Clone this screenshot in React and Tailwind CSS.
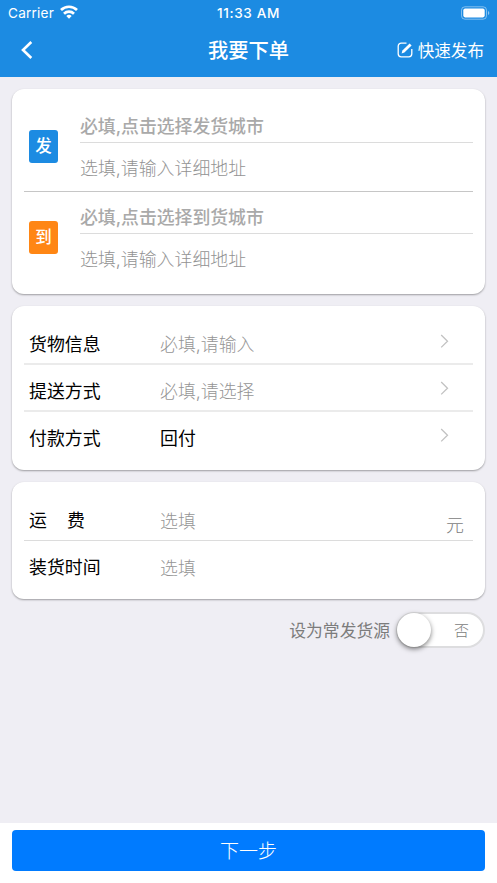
import React from 'react';

function ShipBlock({ badge, color, city, last }) {
  return (
    <div className={`flex h-[91px] items-center ${last ? '' : 'border-b border-[#c6c6c6]'}`}>
      <div className={`ml-[5px] flex h-[33px] w-[29px] shrink-0 items-center justify-center rounded-[3px] text-[16.5px] font-medium text-white ${color}`}>
        {badge}
      </div>
      <div className="ml-[22px] flex h-full flex-1 flex-col pt-2 text-[17.9px] text-[#a9a9a9]">
        <div className="h-[34px] border-b border-[#dcdcdc] font-medium leading-[35px] tracking-[-0.05px]">{city}</div>
        <div className="font-light leading-[51px] text-[#939393]">选填,请输入详细地址</div>
      </div>
    </div>
  );
}

function Row({ label, value, dark, line, arrow, unit }) {
  return (
    <div className={`flex h-[47px] items-center pl-[5px] text-[17.9px] ${line}`}>
      <div className="w-[131px] pt-[9px] text-black">{label}</div>
      <div className={`flex-1 pt-[10px] ${dark ? 'text-black' : 'font-light text-[#959595]'}`}>{value}</div>
      {arrow && (
        <svg className="mr-[24px] h-[14px] w-[9px]" viewBox="0 0 9 14" fill="none" stroke="#c2c2c2" strokeWidth="1.3">
          <path d="M1.2 1L7.5 7.2L1.2 13.4" />
        </svg>
      )}
      {unit && <div className="mr-[9px] pt-[19px] font-light text-[#7c7c7c]">{unit}</div>}
    </div>
  );
}

const card = 'rounded-[12px] bg-white px-3 pt-3 pb-[11px] shadow-[0_1px_2px_rgba(0,0,0,0.35)]';

export default function App() {
  return (
    <div className="flex h-[883px] w-[497px] flex-col overflow-hidden bg-[#efeef4] font-['Inter','Noto_Sans_CJK_SC',sans-serif]">
      <header className="h-[77px] shrink-0 bg-[#1c8be2] text-white">
        <div className="grid h-[26px] grid-cols-3 items-center px-[8px] text-[13.6px]">
          <div className="flex items-center gap-[6px] tracking-[0.2px]">
            Carrier
            <svg className="mb-px h-[14px] w-[18px]" viewBox="0 0 18 14" fill="none" stroke="white" strokeWidth="2.7">
              <path d="M1 5A11.5 11.5 0 0 1 17 5" />
              <path d="M4 8.7A7.2 7.2 0 0 1 14 8.7" />
              <path d="M9 13.8L6.3 11A3.9 3.9 0 0 1 11.7 11Z" fill="white" stroke="none" />
            </svg>
          </div>
          <div className="whitespace-nowrap text-center font-medium tracking-[0.6px]">11:33 AM</div>
          <svg className="-mr-px h-[14px] w-[30px] justify-self-end" viewBox="0 0 30 14" fill="none">
            <rect x="1.5" y="0.8" width="25" height="12.4" rx="3.4" stroke="white" strokeOpacity="0.45" />
            <rect x="3.3" y="2.6" width="21.4" height="8.8" rx="1.8" fill="white" />
            <path d="M28 5v4q1.3-.6 1.3-2T28 5Z" fill="white" fillOpacity="0.5" />
          </svg>
        </div>
        <div className="grid h-[48px] grid-cols-3 items-center px-[13px]">
          <svg className="ml-[7px] h-[18px] w-[13px]" viewBox="0 0 13 18" fill="none" stroke="white" strokeWidth="2.6">
            <path d="M11.3 1L3 9L11.3 17" />
          </svg>
          <h1 className="whitespace-nowrap pt-[3px] text-center text-[20.3px] font-medium">我要下单</h1>
          <div className="flex items-center gap-[5px] justify-self-end whitespace-nowrap text-[16.6px]">
            <svg className="h-[16px] w-[16px]" viewBox="0 0 16 16" fill="none" stroke="white" strokeWidth="1.3">
              <path d="M9.5 1.2H4.2A3 3 0 0 0 1.2 4.2V11.8A3 3 0 0 0 4.2 14.8H11.8A3 3 0 0 0 14.8 11.8V7" />
              <path d="M4.6 11.4L5.4 8.6L12.6 1.4L14.6 3.4L7.4 10.6Z" fill="white" stroke="none" />
            </svg>
            <span className="pt-[3px]">快速发布</span>
          </div>
        </div>
      </header>

      <main className="flex flex-1 flex-col gap-3 px-3 pt-3">
        <section className={card}>
          <ShipBlock badge="发" color="bg-[#1c8be2]" city="必填,点击选择发货城市" />
          <ShipBlock badge="到" color="bg-[#ff8614]" city="必填,点击选择到货城市" last />
        </section>

        <section className={card}>
          <Row label="货物信息" value="必填,请输入" line="border-b-2 border-[#ebebeb]" arrow />
          <Row label="提送方式" value="必填,请选择" line="border-b-2 border-[#ebebeb]" arrow />
          <Row label="付款方式" value="回付" dark line="border-b-2 border-transparent" arrow />
        </section>

        <section className={card}>
          <Row label={<span className="flex gap-[20px]"><span>运</span><span>费</span></span>} value="选填" line="border-b border-[#dcdcdc]" unit="元" />
          <Row label="装货时间" value="选填" line="border-b border-transparent" />
        </section>

        <div className="mt-px flex h-[36px] items-center justify-end gap-[6px] text-[16.8px] text-[#7c7c7c]">
          <span className="pt-[4px]">设为常发货源</span>
          <div className="flex h-[36px] w-[89px] items-center justify-between rounded-full border-2 border-[#dddddf] bg-white pr-[14px] text-[15px] text-[#7c7c7c]">
            <span className="-ml-px h-[34px] w-[34px] rounded-full bg-white shadow-[0_2px_5px_rgba(0,0,0,0.5)]" />
            <span className="pt-[3px] font-light">否</span>
          </div>
        </div>
      </main>

      <footer className="h-[60px] shrink-0 bg-white px-3 pt-[7px]">
        <button className="block h-[41px] w-full rounded-[4px] bg-[#007bff] pt-[3px] text-[19px] font-light text-white">下一步</button>
      </footer>
    </div>
  );
}
